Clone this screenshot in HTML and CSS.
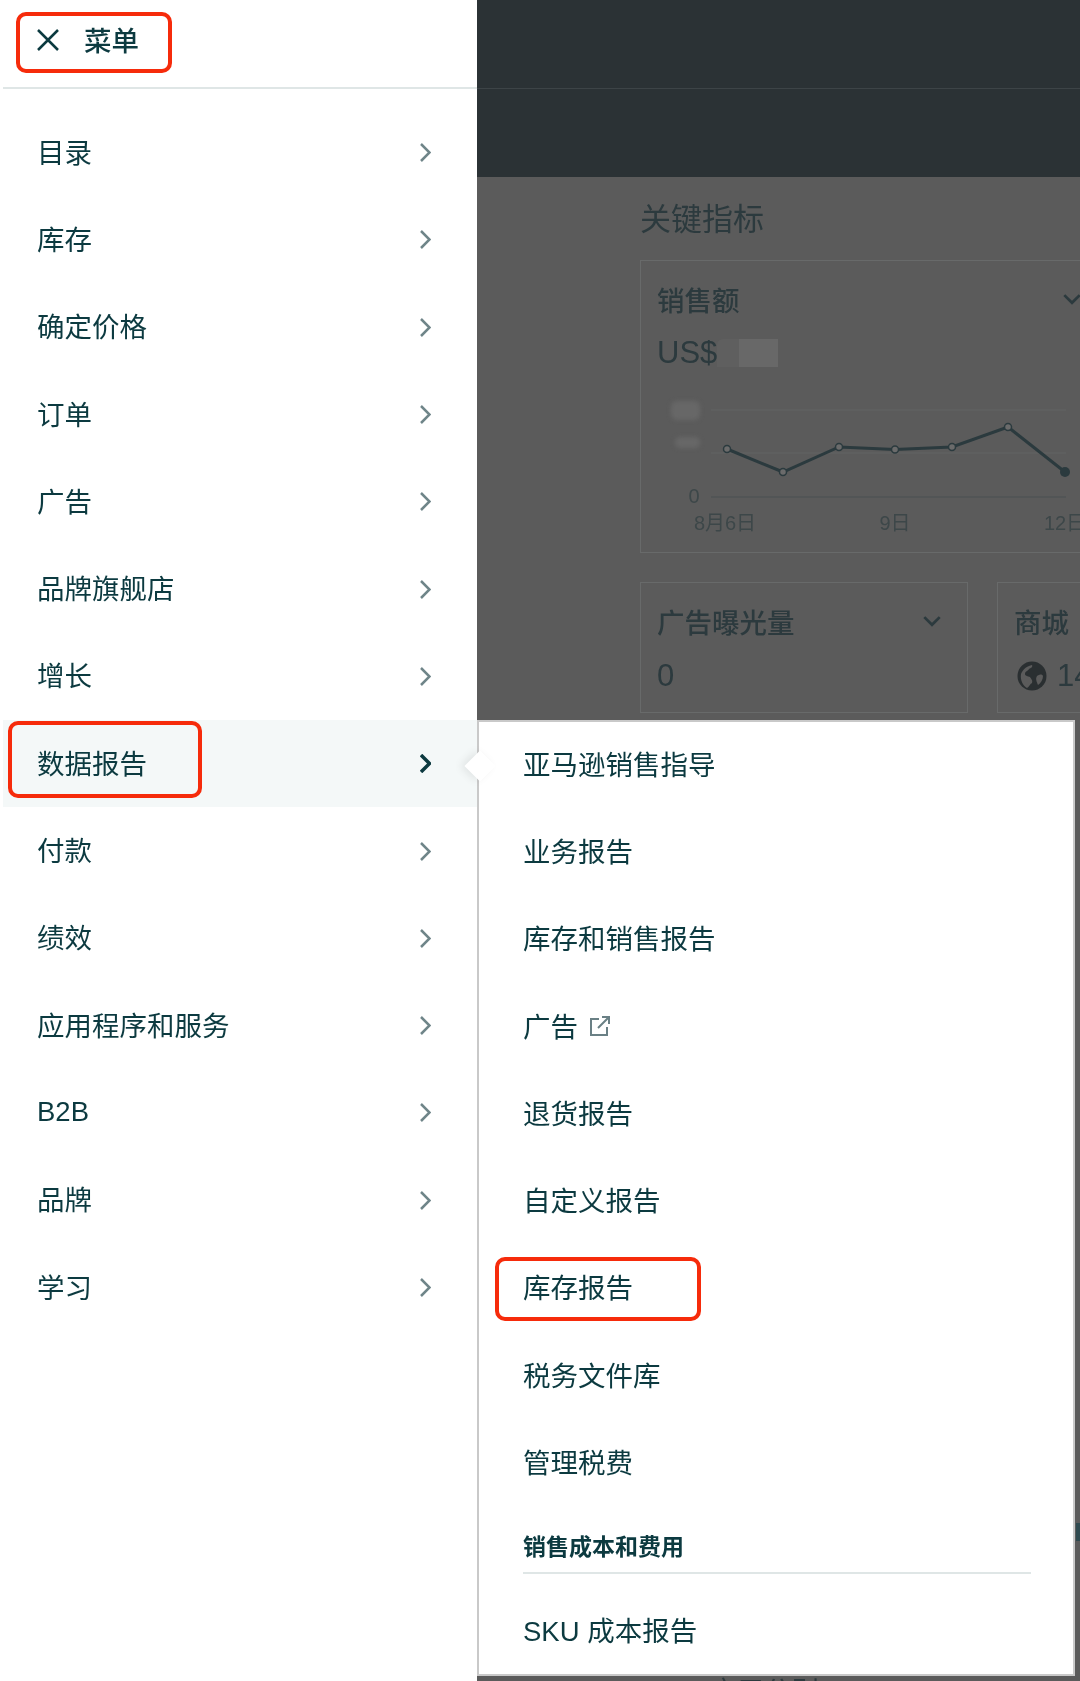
FILE: index.html
```html
<!DOCTYPE html>
<html lang="zh-CN">
<head>
    <meta charset="UTF-8">
    <meta name="viewport" content="width=device-width, initial-scale=1.0">
    <title>菜单</title>
    <link rel="stylesheet" href="styles.css">
</head>
<body>
<div class="page">
    <!-- dimmed dashboard behind the menu -->
    <header class="topbar">
        <div class="topbar-row"></div>
    </header>
    <main class="dash">
        <h2 class="dash-title">关键指标</h2>
        <section class="card card-wide">
            <div class="card-head">
                <span>销售额</span>
                <svg class="card-caret" viewBox="0 0 16 10"><path d="M1 1l7 7 7-7"/></svg>
            </div>
            <div class="card-value">US$<span class="mask-dark"></span><span class="mask-light"></span></div>
            <svg class="chart" viewBox="657 390 430 150">
                <rect class="chart-mask" x="671" y="401" width="29" height="19" rx="6"/>
                <rect class="chart-mask" x="675" y="437" width="25" height="11" rx="5"/>
                <path class="chart-grid" d="M711 410H1066M711 453H1066"/>
                <path class="chart-axis" d="M711 497H1066"/>
                <polyline class="chart-line" points="727,449 783,472 839,447 895,449.500 952,447 1008,427 1065,472"/>
                <circle class="chart-dot" cx="727" cy="449" r="3.500"/>
                <circle class="chart-dot" cx="783" cy="472" r="3.500"/>
                <circle class="chart-dot" cx="839" cy="447" r="3.500"/>
                <circle class="chart-dot" cx="895" cy="449.500" r="3.500"/>
                <circle class="chart-dot" cx="952" cy="447" r="3.500"/>
                <circle class="chart-dot" cx="1008" cy="427" r="3.500"/>
                <circle class="chart-dot-end" cx="1065" cy="472" r="5"/>
                <text class="chart-label" x="694" y="503" text-anchor="middle">0</text>
                <text class="chart-label" x="725" y="530" text-anchor="middle">8月6日</text>
                <text class="chart-label" x="895" y="530" text-anchor="middle">9日</text>
                <text class="chart-label" x="1065" y="530" text-anchor="middle">12日</text>
            </svg>
        </section>
        <div class="card-row">
            <section class="card">
                <div class="card-head">
                    <span>广告曝光量</span>
                    <svg class="card-caret" viewBox="0 0 16 10"><path d="M1 1l7 7 7-7"/></svg>
                </div>
                <div class="card-value card-value-low">0</div>
            </section>
            <section class="card card-shop">
                <div class="card-head"><span>商城</span></div>
                <div class="card-value card-value-low">
                    <svg class="globe" viewBox="0 0 30 30">
                        <circle cx="15" cy="15" r="14.500" fill="#2a2f31"/>
                        <path fill="#5b5b5b" d="M4 13c2-5 6-8 11-9 1 2-1 3-3 4-1 2-4 2-4 5 0 2 3 2 5 3 1 2 3 3 2 6-2 1-3 4-5 5C6 25 3 19 4 13zM20 15c3-2 5-2 6 0 0 3-2 7-5 9-1-3-3-6-1-9z"/>
                    </svg>
                    <span>14</span>
                </div>
            </section>
        </div>
        <div class="dash-next">应用公别</div>
    </main>
    <div class="edge-mark"></div>

    <!-- slide-out menu -->
    <nav class="side">
        <div class="side-head">
            <svg class="close-icon" viewBox="0 0 22 22"><path d="M1 1l20 20M21 1L1 21"/></svg>
            <span class="side-head-text">菜单</span>
        </div>
        <ul class="side-list">
            <li class="side-item">目录<svg class="chev" viewBox="0 0 11 19"><path d="M1 1l8.500 8.500L1 18"/></svg></li>
            <li class="side-item">库存<svg class="chev" viewBox="0 0 11 19"><path d="M1 1l8.500 8.500L1 18"/></svg></li>
            <li class="side-item">确定价格<svg class="chev" viewBox="0 0 11 19"><path d="M1 1l8.500 8.500L1 18"/></svg></li>
            <li class="side-item">订单<svg class="chev" viewBox="0 0 11 19"><path d="M1 1l8.500 8.500L1 18"/></svg></li>
            <li class="side-item">广告<svg class="chev" viewBox="0 0 11 19"><path d="M1 1l8.500 8.500L1 18"/></svg></li>
            <li class="side-item">品牌旗舰店<svg class="chev" viewBox="0 0 11 19"><path d="M1 1l8.500 8.500L1 18"/></svg></li>
            <li class="side-item">增长<svg class="chev" viewBox="0 0 11 19"><path d="M1 1l8.500 8.500L1 18"/></svg></li>
            <li class="side-item side-item-active">数据报告<svg class="chev" viewBox="0 0 11 19"><path d="M1 1l8.500 8.500L1 18"/></svg></li>
            <li class="side-item">付款<svg class="chev" viewBox="0 0 11 19"><path d="M1 1l8.500 8.500L1 18"/></svg></li>
            <li class="side-item">绩效<svg class="chev" viewBox="0 0 11 19"><path d="M1 1l8.500 8.500L1 18"/></svg></li>
            <li class="side-item">应用程序和服务<svg class="chev" viewBox="0 0 11 19"><path d="M1 1l8.500 8.500L1 18"/></svg></li>
            <li class="side-item side-item-latin">B2B<svg class="chev" viewBox="0 0 11 19"><path d="M1 1l8.500 8.500L1 18"/></svg></li>
            <li class="side-item">品牌<svg class="chev" viewBox="0 0 11 19"><path d="M1 1l8.500 8.500L1 18"/></svg></li>
            <li class="side-item">学习<svg class="chev" viewBox="0 0 11 19"><path d="M1 1l8.500 8.500L1 18"/></svg></li>
        </ul>
    </nav>

    <div class="sub">
        <ul class="sub-list">
            <li class="sub-item">亚马逊销售指导</li>
            <li class="sub-item">业务报告</li>
            <li class="sub-item">库存和销售报告</li>
            <li class="sub-item">广告
                <svg class="ext-icon" viewBox="0 0 22 22"><path d="M10 4H2v16h16v-8M9 13L20 2M13 2h7v7"/></svg>
            </li>
            <li class="sub-item">退货报告</li>
            <li class="sub-item">自定义报告</li>
            <li class="sub-item">库存报告</li>
            <li class="sub-item">税务文件库</li>
            <li class="sub-item">管理税费</li>
        </ul>
        <div class="sub-heading">销售成本和费用</div>
        <div class="sub-item sub-item-last">SKU 成本报告</div>
    </div>

    <!-- red annotation boxes -->
    <div class="mark mark-head"></div>
    <div class="mark mark-report"></div>
    <div class="mark mark-stock"></div>
</div>
</body>
</html>
```

FILE: styles.css
```css
* {
    box-sizing: border-box;
}
html, body {
    margin: 0;
    padding: 0;
}
body {
    background-color: #5b5b5b;
    font-family: "Liberation Sans", "Noto Sans CJK SC", sans-serif;
    color: #0c3a40;
}
ul {
    list-style: none;
    margin: 0;
    padding: 0;
}
.page {
    position: relative;
    width: 1080px;
    height: 1681px;
    overflow: hidden;
    background-color: #5b5b5b;
    filter: blur(0.5px);
}

/* dashboard */
.topbar {
    height: 177px;
    background-color: #2b3235;
}
.topbar-row {
    height: 89px;
    border-bottom: 1px solid #3d4447;
}
.dash {
    padding: 20px 0 0 640px;
    width: 1200px;
    color: #2c3a3e;
}
.dash-title {
    margin: 0 0 17px;
    font-size: 31px;
    line-height: 46px;
    font-weight: 400;
}
.card {
    border: 1px solid #686a6a;
    padding: 18px 16px 14px;
}
.card-wide {
    width: 500px;
    height: 293px;
}
.card-row {
    display: grid;
    grid-template-columns: 328px 328px;
    gap: 29px;
    margin-top: 29px;
}
.card-head {
    display: flex;
    justify-content: space-between;
    align-items: center;
    height: 40px;
    font-size: 27.500px;
    font-weight: 500;
}
.card-caret {
    width: 18px;
    height: 11px;
    margin-right: 10px;
    fill: none;
    stroke: #2c3a3e;
    stroke-width: 2.500;
}
.card-wide .card-caret {
    margin-right: 42px;
}
.card-value {
    display: flex;
    align-items: center;
    height: 44px;
    margin-top: 12px;
    font-size: 31px;
}
.card-value-low {
    margin-top: 13px;
}
.mask-dark {
    width: 22px;
    height: 28px;
    background-color: #5f5f5f;
    border-radius: 6px 0 0 0;
}
.mask-light {
    width: 39px;
    height: 28px;
    background-color: #686868;
}
.chart {
    display: block;
    width: 430px;
    height: 150px;
    margin-top: 15px;
}
.chart-mask {
    fill: #676767;
    filter: blur(2px);
}
.chart-grid {
    stroke: #636565;
    stroke-width: 1;
}
.chart-axis {
    stroke: #4a5052;
    stroke-width: 1;
}
.chart-line {
    fill: none;
    stroke: #2b3a3e;
    stroke-width: 3;
}
.chart-dot {
    fill: #6b6b6b;
    stroke: #2b3a3e;
    stroke-width: 1.500;
}
.chart-dot-end {
    fill: #2b3a3e;
}
.chart-label {
    font-size: 20px;
    fill: #3d4749;
}
.globe {
    width: 30px;
    height: 30px;
    margin: 0 10px 0 3px;
}
.dash-next {
    margin-top: 959px;
    margin-left: 69px;
    font-size: 27.500px;
    line-height: 40px;
}
.edge-mark {
    position: absolute;
    right: 0;
    top: 1523px;
    width: 4px;
    height: 18px;
    background-color: #2f4a50;
}

/* side menu */
.side {
    position: absolute;
    left: 0;
    top: 0;
    width: 477px;
    height: 100%;
    background-color: #fff;
    padding-left: 3px;
}
.side-head {
    display: flex;
    align-items: center;
    height: 89px;
    padding: 0 0 8px 34px;
    border-bottom: 2px solid #dfe6e6;
    font-size: 27.500px;
    font-weight: 500;
}
.side-head-text {
    margin-bottom: 2px;
}
.close-icon {
    width: 22px;
    height: 22px;
    margin-right: 25px;
    fill: none;
    stroke: #0c3a40;
    stroke-width: 2.500;
}
.side-list {
    padding-top: 20px;
}
.side-item {
    display: flex;
    justify-content: space-between;
    align-items: center;
    height: 87.300px;
    padding: 0 46px 4px 34px;
    font-size: 27.500px;
}
.side-item-latin {
    padding-bottom: 2px;
}
.side-item-active {
    background-color: #f4f8f8;
}
.chev {
    width: 11px;
    height: 19px;
    margin-top: 4px;
    fill: none;
    stroke: #6f8589;
    stroke-width: 2.500;
}
.side-item-latin .chev {
    margin-top: 2px;
}
.side-item-active .chev {
    stroke: #0c3a40;
    stroke-width: 3.500;
}

/* sub menu */
.sub {
    position: absolute;
    left: 477px;
    top: 720px;
    width: 598px;
    height: 956px;
    background-color: #fff;
    border: 2px solid #c9c9c9;
}
.sub::before {
    content: "";
    position: absolute;
    left: -10px;
    top: 33px;
    width: 22px;
    height: 22px;
    background-color: #fff;
    transform: rotate(45deg);
    box-shadow: -3px 3px 8px rgba(0, 0, 0, 0.08);
}
.sub-list {
    position: relative;
}
.sub-item {
    display: flex;
    align-items: center;
    height: 87.300px;
    padding: 0 0 6px 44px;
    font-size: 27.500px;
    position: relative;
}
.ext-icon {
    width: 22px;
    height: 22px;
    margin: 2px 0 0 11px;
    fill: none;
    stroke: #6a8085;
    stroke-width: 2;
}
.sub-heading {
    margin: 24px 42px 0 44px;
    padding-bottom: 10px;
    border-bottom: 2px solid #dfe6e6;
    font-size: 23px;
    line-height: 30px;
    font-weight: 700;
}
.sub-item-last {
    margin-top: 14px;
    padding-bottom: 4px;
}

/* annotations */
.mark {
    position: absolute;
    border: 4px solid #f62b0b;
    border-radius: 10px;
}
.mark-head {
    left: 16px;
    top: 12px;
    width: 156px;
    height: 61px;
}
.mark-report {
    left: 8px;
    top: 721px;
    width: 194px;
    height: 77px;
}
.mark-stock {
    left: 495px;
    top: 1257px;
    width: 206px;
    height: 64px;
}
```
